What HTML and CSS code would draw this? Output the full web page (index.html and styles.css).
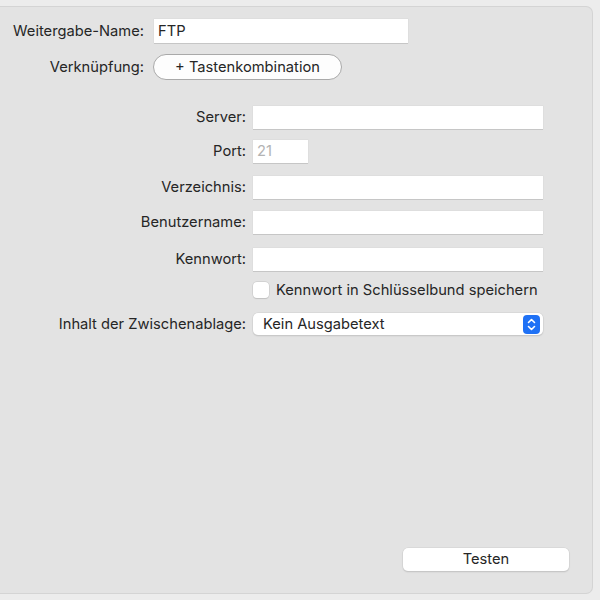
FILE: index.html
```html
<!DOCTYPE html>
<html lang="de">
<head>
<meta charset="utf-8">
<title>FTP Weitergabe</title>
<link rel="stylesheet" href="styles.css">
</head>
<body>
<div class="panel">
  <div class="row row-name">
    <label class="label label-top">Weitergabe-Name:</label>
    <div class="field field-name">FTP</div>
  </div>
  <div class="row row-shortcut">
    <label class="label label-top">Verknüpfung:</label>
    <button class="pill">+ Tastenkombination</button>
  </div>

  <div class="row row-server">
    <label class="label label-wide">Server:</label>
    <div class="field field-wide"></div>
  </div>
  <div class="row row-port">
    <label class="label label-wide">Port:</label>
    <div class="field field-port"><span class="placeholder">21</span></div>
  </div>
  <div class="row row-dir">
    <label class="label label-wide">Verzeichnis:</label>
    <div class="field field-wide"></div>
  </div>
  <div class="row row-user">
    <label class="label label-wide">Benutzername:</label>
    <div class="field field-wide"></div>
  </div>
  <div class="row row-pass">
    <label class="label label-wide">Kennwort:</label>
    <div class="field field-wide"></div>
  </div>
  <div class="row row-check">
    <span class="checkbox"></span>
    <span class="check-text">Kennwort in Schlüsselbund speichern</span>
  </div>
  <div class="row row-popup">
    <label class="label label-wide">Inhalt der Zwischenablage:</label>
    <div class="popup">
      <span class="popup-text">Kein Ausgabetext</span>
      <span class="stepper">
        <svg width="17" height="19" viewBox="0 0 17 19" aria-hidden="true">
          <path d="M5.5 7.5 L8.5 4.5 L11.5 7.5" fill="none" stroke="#fff" stroke-width="1.6" stroke-linecap="round" stroke-linejoin="round"/>
          <path d="M5.5 11.5 L8.5 14.5 L11.5 11.5" fill="none" stroke="#fff" stroke-width="1.6" stroke-linecap="round" stroke-linejoin="round"/>
        </svg>
      </span>
    </div>
  </div>
  <div class="row row-test">
    <button class="test-btn">Testen</button>
  </div>
</div>
</body>
</html>
```
FILE: styles.css
```css
html, body {
  margin: 0;
  padding: 0;
  background: #ececec;
}
body {
  font-family: Inter, "Noto Sans", "Liberation Sans", sans-serif;
  font-size: 14.7px;
  line-height: 17px;
  color: #262626;
}
.panel {
  box-sizing: border-box;
  width: 593px;
  height: 588px;
  margin-top: 6px;
  background: #e3e3e3;
  border: 1px solid #d4d4d4;
  border-left: none;
  border-radius: 0 7px 7px 0;
  display: flex;
  flex-direction: column;
}
.row {
  display: flex;
  align-items: center;
}
.label {
  text-align: right;
  white-space: nowrap;
  flex: none;
}
.label-top { width: 144px; margin-right: 10px; }
.label-wide { width: 246px; margin-right: 7px; }

.field {
  box-sizing: border-box;
  background: #fff;
  height: 23px;
  box-shadow: 0 1px 0 #c6c6c6, 0 0 0 0.5px #dadada;
  padding: 0 4px;
  display: flex;
  align-items: center;
  flex: none;
}
.field-name { width: 254px; height: 24px; }
.field-wide { width: 290px; }
.field-port { width: 55px; }
.placeholder { color: #b3b3b3; }

.row-name { margin-top: 12px; }
.row-shortcut { margin-top: 11px; }
.row-server { margin-top: 26px; }
.row-port { margin-top: 11px; }
.row-dir { margin-top: 13px; }
.row-user { margin-top: 12px; }
.row-pass { margin-top: 14px; }
.row-check { margin-top: 11px; height: 16px; padding-left: 253px; }
.row-popup { margin-top: 15px; }
.row-test { margin-top: 213px; padding-left: 403px; }

.pill {
  box-sizing: border-box;
  width: 189px;
  height: 26px;
  margin-left: -1px;
  border: 1px solid #a9a9a9;
  border-radius: 13px;
  background: #fdfdfd;
  font: inherit;
  color: #262626;
  padding: 0;
}

.checkbox {
  box-sizing: border-box;
  width: 16px;
  height: 16px;
  background: #fff;
  border-radius: 4px;
  box-shadow: 0 0 0 0.5px #c4c4c4, 0 0.5px 1px rgba(0,0,0,0.15);
  flex: none;
}
.check-text { margin-left: 7px; }

.popup {
  box-sizing: border-box;
  width: 290px;
  height: 22px;
  background: #fff;
  border-radius: 5px;
  box-shadow: 0 0 0 0.5px #cfcfcf, 0 1px 1.5px rgba(0,0,0,0.18);
  display: flex;
  align-items: center;
  padding-left: 10px;
  padding-right: 3px;
}
.popup-text { flex: 1; }
.stepper {
  width: 17px;
  height: 19px;
  background: #1f71f5;
  border-radius: 4px;
  display: flex;
}

.test-btn {
  box-sizing: border-box;
  width: 166px;
  height: 23px;
  border: none;
  border-radius: 5px;
  background: #fff;
  box-shadow: 0 0 0 0.5px #cfcfcf, 0 1px 1.5px rgba(0,0,0,0.2);
  font: inherit;
  color: #262626;
  padding: 0;
}
```
